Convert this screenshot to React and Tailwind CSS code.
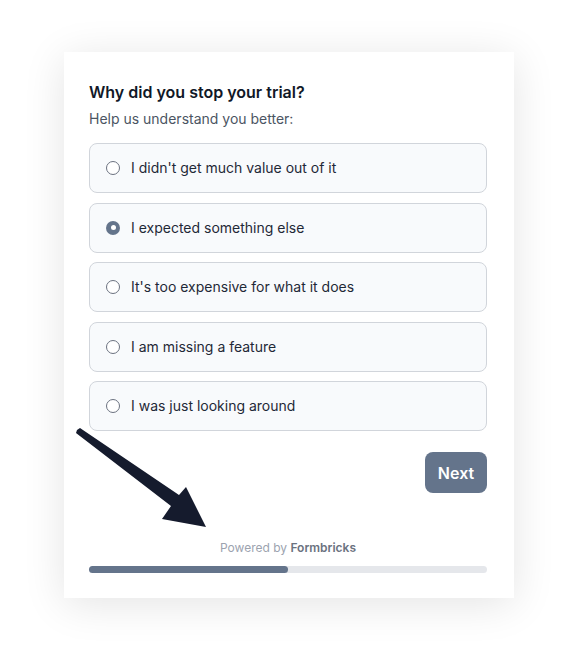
import React, { useState } from 'react';

const options = [
  "I didn't get much value out of it",
  'I expected something else',
  "It's too expensive for what it does",
  'I am missing a feature',
  'I was just looking around',
];

const Radio = ({ checked }) => (
  checked ? (
    <span className="flex h-[14px] w-[14px] shrink-0 items-center justify-center rounded-full bg-[#64748b]">
      <span className="h-[5px] w-[5px] rounded-full bg-white" />
    </span>
  ) : (
    <span className="h-[14px] w-[14px] shrink-0 rounded-full border border-[#6b7280] bg-white" />
  )
);

const Arrow = () => (
  <svg className="pointer-events-none absolute left-0 top-0" width="574" height="648" viewBox="0 0 574 648">
    <polygon
      points="77,430 80,428 179,495 186,487 206,527 162,519 171,506 76,433"
      fill="#151b2d"
    />
  </svg>
);

export default function App() {
  const [selected, setSelected] = useState(1);

  return (
    <div className="relative min-h-[648px] w-[574px] bg-white pl-[64px] pt-[52px]" style={{ fontFamily: 'Inter, "Noto Sans", sans-serif' }}>
      <div className="w-[450px] bg-white pb-[25px] pl-[25px] pr-[27px] pt-[28px] shadow-[0_6px_40px_rgba(0,0,0,0.11)]">
        <h2 className="text-base font-semibold leading-6 text-[#111827]">Why did you stop your trial?</h2>
        <p className="mt-[5px] text-sm leading-5 text-[#4b5563]">Help us understand you better:</p>

        <div className="mt-[14px] flex flex-col gap-[9.5px]">
          {options.map((opt, i) => (
            <label
              key={opt}
              onClick={() => setSelected(i)}
              className="flex h-[50px] cursor-pointer items-center gap-[11px] rounded-lg border border-[#d1d5db] bg-[#f8fafc] pl-[16px] text-sm text-[#1f2937]"
            >
              <Radio checked={selected === i} />
              <span>{opt}</span>
            </label>
          ))}
        </div>

        <div className="mt-[21px] flex justify-end">
          <button className="h-[41px] w-[62px] rounded-lg bg-[#64748b] text-base font-semibold text-white">
            Next
          </button>
        </div>

        <p className="mt-[47px] text-center text-xs leading-4 text-[#9ca3af]">
          Powered by <span className="font-semibold text-[#6b7280]">Formbricks</span>
        </p>

        <div className="mt-[10px] h-[7px] w-full rounded-full bg-[#e5e7eb]">
          <div className="h-full w-1/2 rounded-full bg-[#64748b]" />
        </div>
      </div>
      <Arrow />
    </div>
  );
}
